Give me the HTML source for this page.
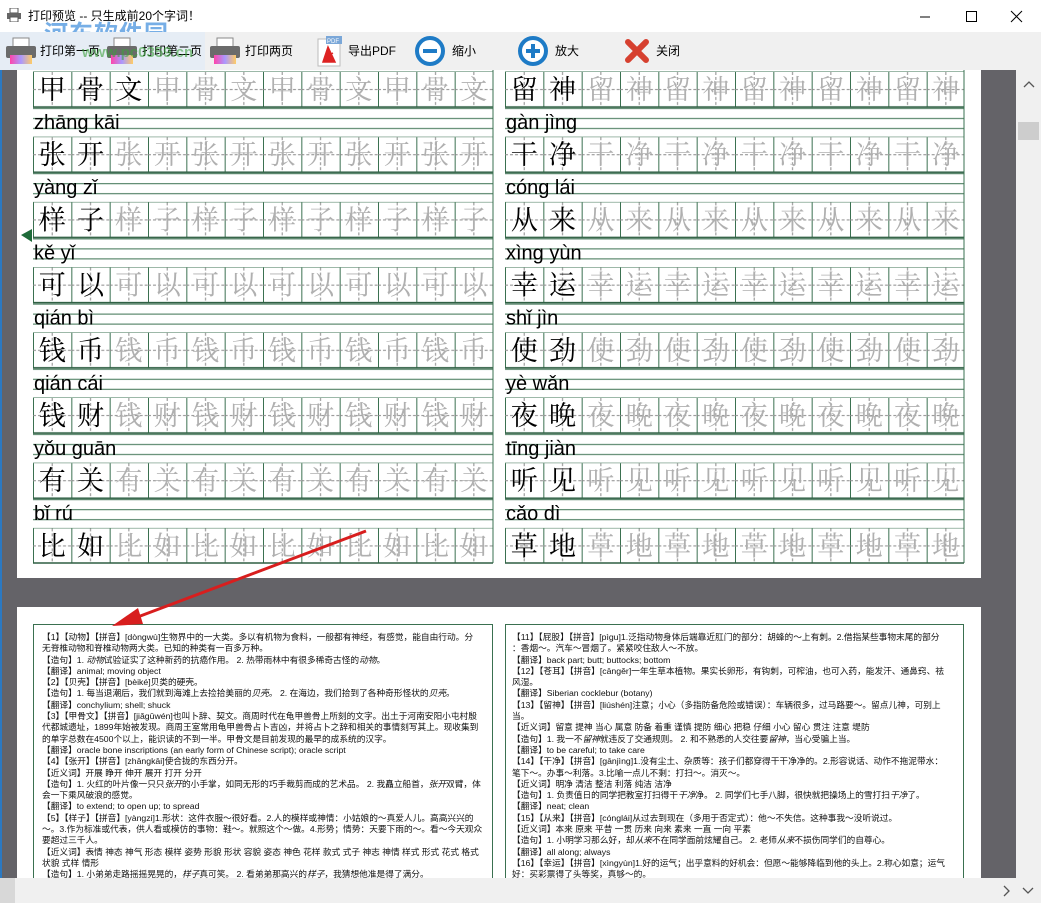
<!DOCTYPE html>
<html><head><meta charset="utf-8">
<style>
*{margin:0;padding:0;box-sizing:border-box}
body{width:1041px;height:903px;overflow:hidden;background:#fff;font-family:"Liberation Sans","Noto Sans CJK SC",sans-serif;position:relative}
.abs{position:absolute}
#title{left:0;top:0;width:1041px;height:32px;background:#fff;font-size:12px;color:#000}
#tb{left:0;top:32px;width:1041px;height:38px;background:#f0f0f0}
.btn{position:absolute;top:0;height:38px;font-size:12px;line-height:38px;color:#000;font-family:"Liberation Sans","Noto Sans CJK SC",sans-serif}
#area{left:0;top:70px;width:1016px;height:808px;background:#646368;box-shadow:inset 2px 0 0 #2b79c2}
.page{position:absolute;left:17px;width:964px;background:#fff}
.col{position:absolute;border:1px solid #3a7050;font-size:8.7px;line-height:11.3px;color:#111;padding:7px 0 0 8px;white-space:nowrap;overflow:hidden}
.col div{height:11.3px}
#vs{left:1016px;top:70px;width:25px;height:808px;background:#f0f0f0}
#hs{left:0;top:878px;width:1041px;height:25px;background:#f0f0f0}
</style></head><body>

<div id="title" class="abs">
 <svg class="abs" style="left:7px;top:8px" width="14" height="14"><rect x="3" y="0" width="8" height="5" fill="#fff" stroke="#555"/><rect x="0" y="5" width="14" height="6" fill="#666"/><rect x="3" y="9" width="8" height="5" fill="#fff" stroke="#555"/></svg>
 <div class="abs" style="left:28px;top:7px">打印预览 -- 只生成前20个字词！</div>
 <div class="abs" style="left:44px;top:14px;font-size:24px;font-weight:bold;color:rgba(60,140,220,0.7);letter-spacing:1px">河东软件园</div>
 <svg class="abs" style="left:918px;top:10px" width="110" height="14"><line x1="2" y1="7" x2="12" y2="7" stroke="#000"/><rect x="48.5" y="1.5" width="10" height="10" fill="none" stroke="#000"/><path d="M93 1 L104 12 M104 1 L93 12" stroke="#000"/></svg>
</div>

<div id="tb" class="abs">
 <div class="abs" style="left:0;top:0;width:205px;height:38px;background:#e6edf5"></div>
 <svg class="abs" style="left:5px;top:4px" width="32" height="30"><rect x="8" y="2" width="16" height="9" fill="#fff" stroke="#888"/><rect x="1" y="10" width="30" height="12" rx="2" fill="#6b6b6b"/><rect x="5" y="19" width="22" height="9" fill="url(#rb)"/><defs><linearGradient id="rb"><stop offset="0" stop-color="#f4a"/><stop offset=".5" stop-color="#a9f"/><stop offset="1" stop-color="#fc6"/></linearGradient></defs></svg>
 <div class="btn" style="left:40px">打印第一页</div>
 <svg class="abs" style="left:106px;top:4px" width="32" height="30"><rect x="8" y="2" width="16" height="9" fill="#fff" stroke="#888"/><rect x="1" y="10" width="30" height="12" rx="2" fill="#6b6b6b"/><rect x="5" y="19" width="22" height="9" fill="url(#rb)"/></svg>
 <div class="btn" style="left:142px">打印第二页</div>
 <svg class="abs" style="left:209px;top:4px" width="32" height="30"><rect x="8" y="2" width="16" height="9" fill="#fff" stroke="#888"/><rect x="1" y="10" width="30" height="12" rx="2" fill="#6b6b6b"/><rect x="5" y="19" width="22" height="9" fill="url(#rb)"/></svg>
 <div class="btn" style="left:245px">打印两页</div>
 <div class="abs" style="left:82px;top:12px;font-size:15px;color:rgba(60,160,60,0.6);font-weight:bold">www.pc0359.cn</div>
 <svg class="abs" style="left:316px;top:3px" width="28" height="32"><rect x="2" y="4" width="22" height="27" fill="#fff" stroke="#bbb"/><rect x="10" y="1" width="16" height="8" fill="#7aa7d8"/><text x="11" y="8" font-size="6" fill="#fff" font-family="Liberation Sans">PDF</text><path d="M7 27 L12 12 L19 27 Z M9 22 L17 18" fill="#d22" stroke="#d22" stroke-width="1.5"/></svg>
 <div class="btn" style="left:348px">导出PDF</div>
 <svg class="abs" style="left:414px;top:3px" width="32" height="32"><circle cx="16" cy="16" r="13" fill="#fff" stroke="#1e7bc6" stroke-width="4"/><rect x="9" y="14" width="14" height="4" fill="#1e7bc6"/></svg>
 <div class="btn" style="left:452px">缩小</div>
 <svg class="abs" style="left:517px;top:3px" width="32" height="32"><circle cx="16" cy="16" r="13" fill="#fff" stroke="#1e7bc6" stroke-width="4"/><rect x="9" y="14" width="14" height="4" fill="#1e7bc6"/><rect x="14" y="9" width="4" height="14" fill="#1e7bc6"/></svg>
 <div class="btn" style="left:555px">放大</div>
 <svg class="abs" style="left:624px;top:7px" width="26" height="24"><path d="M4 3 L22 21 M22 3 L4 21" stroke="#d6402f" stroke-width="6" stroke-linecap="round"/></svg>
 <div class="btn" style="left:656px">关闭</div>
</div>

<div id="area" class="abs">
 <div class="page" style="top:0;height:508px">
 <svg width="964" height="508" style="position:absolute;left:0;top:0">
  <defs>
   <pattern id="cl" x="16" y="0" width="38.333" height="65.2" patternUnits="userSpaceOnUse">
    <line x1="0.5" y1="0" x2="0.5" y2="35" stroke="#3a7050"/>
    <line x1="19.2" y1="0" x2="19.2" y2="35" stroke="#8a8a8a" stroke-dasharray="3,2"/>
    <line x1="0" y1="17.5" x2="38.333" y2="17.5" stroke="#8a8a8a" stroke-dasharray="3,2"/>
   </pattern>
   <pattern id="cr" x="488" y="0" width="38.333" height="65.2" patternUnits="userSpaceOnUse">
    <line x1="0.5" y1="0" x2="0.5" y2="35" stroke="#3a7050"/>
    <line x1="19.2" y1="0" x2="19.2" y2="35" stroke="#8a8a8a" stroke-dasharray="3,2"/>
    <line x1="0" y1="17.5" x2="38.333" y2="17.5" stroke="#8a8a8a" stroke-dasharray="3,2"/>
   </pattern>
   <pattern id="ln" x="0" y="2" width="10" height="65.2" patternUnits="userSpaceOnUse">
    <line x1="0" y1="35" x2="10" y2="35" stroke="#2e5e42" stroke-width="1.5"/>
    <line x1="0" y1="36.5" x2="10" y2="36.5" stroke="#3a7050"/>
    <line x1="0" y1="46.5" x2="10" y2="46.5" stroke="#3a7050"/>
    <line x1="0" y1="56.5" x2="10" y2="56.5" stroke="#3a7050"/>
    <line x1="0" y1="65.2" x2="10" y2="65.2" stroke="#3a7050"/>
   </pattern>
  </defs>
  <g transform="translate(0,2)">
   <rect x="16" y="0" width="460" height="491" fill="url(#cl)"/>
   <rect x="488" y="0" width="459" height="491" fill="url(#cr)"/>
  </g>
  <rect x="16" y="0" width="460" height="491" fill="url(#ln)"/>
  <rect x="488" y="0" width="459" height="491" fill="url(#ln)"/>
  <line x1="476" y1="0" x2="476" y2="493" stroke="#3a7050"/>
  <line x1="947" y1="0" x2="947" y2="493" stroke="#3a7050"/>
  <line x1="16" y1="493" x2="476" y2="493" stroke="#2e5e42" stroke-width="1.5"/>
  <line x1="488" y1="493" x2="947" y2="493" stroke="#2e5e42" stroke-width="1.5"/>

  <g font-family="'Noto Serif CJK SC','Liberation Serif',serif" font-size="27" text-anchor="middle">
   <text y="29"><tspan x="35.2 73.5 111.8" fill="#000">甲骨文</tspan><tspan x="150.2 188.5 226.8 265.2 303.5 341.8 380.2 418.5 456.8" fill="#b0b0b0">甲骨文甲骨文甲骨文</tspan></text>
   <text y="94.2"><tspan x="35.2 73.5" fill="#000">张开</tspan><tspan x="111.8 150.2 188.5 226.8 265.2 303.5 341.8 380.2 418.5 456.8" fill="#b0b0b0">张开张开张开张开张开</tspan></text>
   <text y="159.4"><tspan x="35.2 73.5" fill="#000">样子</tspan><tspan x="111.8 150.2 188.5 226.8 265.2 303.5 341.8 380.2 418.5 456.8" fill="#b0b0b0">样子样子样子样子样子</tspan></text>
   <text y="224.6"><tspan x="35.2 73.5" fill="#000">可以</tspan><tspan x="111.8 150.2 188.5 226.8 265.2 303.5 341.8 380.2 418.5 456.8" fill="#b0b0b0">可以可以可以可以可以</tspan></text>
   <text y="289.8"><tspan x="35.2 73.5" fill="#000">钱币</tspan><tspan x="111.8 150.2 188.5 226.8 265.2 303.5 341.8 380.2 418.5 456.8" fill="#b0b0b0">钱币钱币钱币钱币钱币</tspan></text>
   <text y="355"><tspan x="35.2 73.5" fill="#000">钱财</tspan><tspan x="111.8 150.2 188.5 226.8 265.2 303.5 341.8 380.2 418.5 456.8" fill="#b0b0b0">钱财钱财钱财钱财钱财</tspan></text>
   <text y="420.2"><tspan x="35.2 73.5" fill="#000">有关</tspan><tspan x="111.8 150.2 188.5 226.8 265.2 303.5 341.8 380.2 418.5 456.8" fill="#b0b0b0">有关有关有关有关有关</tspan></text>
   <text y="485.4"><tspan x="35.2 73.5" fill="#000">比如</tspan><tspan x="111.8 150.2 188.5 226.8 265.2 303.5 341.8 380.2 418.5 456.8" fill="#b0b0b0">比如比如比如比如比如</tspan></text>

   <text y="29"><tspan x="507.2 545.5" fill="#000">留神</tspan><tspan x="583.8 622.2 660.5 698.8 737.2 775.5 813.8 852.2 890.5 928.8" fill="#b0b0b0">留神留神留神留神留神</tspan></text>
   <text y="94.2"><tspan x="507.2 545.5" fill="#000">干净</tspan><tspan x="583.8 622.2 660.5 698.8 737.2 775.5 813.8 852.2 890.5 928.8" fill="#b0b0b0">干净干净干净干净干净</tspan></text>
   <text y="159.4"><tspan x="507.2 545.5" fill="#000">从来</tspan><tspan x="583.8 622.2 660.5 698.8 737.2 775.5 813.8 852.2 890.5 928.8" fill="#b0b0b0">从来从来从来从来从来</tspan></text>
   <text y="224.6"><tspan x="507.2 545.5" fill="#000">幸运</tspan><tspan x="583.8 622.2 660.5 698.8 737.2 775.5 813.8 852.2 890.5 928.8" fill="#b0b0b0">幸运幸运幸运幸运幸运</tspan></text>
   <text y="289.8"><tspan x="507.2 545.5" fill="#000">使劲</tspan><tspan x="583.8 622.2 660.5 698.8 737.2 775.5 813.8 852.2 890.5 928.8" fill="#b0b0b0">使劲使劲使劲使劲使劲</tspan></text>
   <text y="355"><tspan x="507.2 545.5" fill="#000">夜晚</tspan><tspan x="583.8 622.2 660.5 698.8 737.2 775.5 813.8 852.2 890.5 928.8" fill="#b0b0b0">夜晚夜晚夜晚夜晚夜晚</tspan></text>
   <text y="420.2"><tspan x="507.2 545.5" fill="#000">听见</tspan><tspan x="583.8 622.2 660.5 698.8 737.2 775.5 813.8 852.2 890.5 928.8" fill="#b0b0b0">听见听见听见听见听见</tspan></text>
   <text y="485.4"><tspan x="507.2 545.5" fill="#000">草地</tspan><tspan x="583.8 622.2 660.5 698.8 737.2 775.5 813.8 852.2 890.5 928.8" fill="#b0b0b0">草地草地草地草地草地</tspan></text>
  </g>
  <g font-family="'Liberation Sans',sans-serif" font-size="20" fill="#000">
   <text x="17" y="59">zhāng kāi</text><text x="489" y="59">gàn jìng</text>
   <text x="17" y="124.2">yàng zǐ</text><text x="489" y="124.2">cóng lái</text>
   <text x="17" y="189.4">kě yǐ</text><text x="489" y="189.4">xìng yùn</text>
   <text x="17" y="254.6">qián bì</text><text x="489" y="254.6">shǐ jìn</text>
   <text x="17" y="319.8">qián cái</text><text x="489" y="319.8">yè wǎn</text>
   <text x="17" y="385">yǒu guān</text><text x="489" y="385">tīng jiàn</text>
   <text x="17" y="450.2">bǐ rú</text><text x="489" y="450.2">cǎo dì</text>
  </g>
 </svg>
 </div>

 <div class="page" style="top:537px;height:271px">
  <div class="col" style="left:16px;top:17px;width:460px;height:260px">
   <div>【1】【动物】【拼音】[dòngwù]生物界中的一大类。多以有机物为食料，一般都有神经，有感觉，能自由行动。分</div>
   <div>无脊椎动物和脊椎动物两大类。已知的种类有一百多万种。</div>
   <div>【造句】1. <i>动物</i>试验证实了这种新药的抗癌作用。 2. 热带雨林中有很多稀奇古怪的<i>动物</i>。</div>
   <div>【翻译】animal; moving object</div>
   <div>【2】【贝壳】【拼音】[bèiké]贝类的硬壳。</div>
   <div>【造句】1. 每当退潮后，我们就到海滩上去捡拾美丽的<i>贝壳</i>。 2. 在海边，我们拾到了各种奇形怪状的<i>贝壳</i>。</div>
   <div>【翻译】conchylium; shell; shuck</div>
   <div>【3】【甲骨文】【拼音】[jiǎgǔwén]也叫卜辞、契文。商周时代在龟甲兽骨上所刻的文字。出土于河南安阳小屯村殷</div>
   <div>代都城遗址，1899年始被发现。商周王室常用龟甲兽骨占卜吉凶，并将占卜之辞和相关的事情刻写其上。现收集到</div>
   <div>的单字总数在4500个以上，能识读的不到一半。甲骨文是目前发现的最早的成系统的汉字。</div>
   <div>【翻译】oracle bone inscriptions (an early form of Chinese script); oracle script</div>
   <div>【4】【张开】【拼音】[zhāngkāi]使合拢的东西分开。</div>
   <div>【近义词】开展 睁开 伸开 展开 打开 分开</div>
   <div>【造句】1. 火红的叶片像一只只<i>张开</i>的小手掌，如同无形的巧手裁剪而成的艺术品。 2. 我矗立船首，<i>张开</i>双臂，体</div>
   <div>会一下乘风破浪的感觉。</div>
   <div>【翻译】to extend; to open up; to spread</div>
   <div>【5】【样子】【拼音】[yàngzi]1.形状：这件衣服～很好看。2.人的模样或神情：小姑娘的～真爱人儿。高高兴兴的</div>
   <div>～。3.作为标准或代表，供人看或模仿的事物：鞋～。就照这个～做。4.形势；情势：天要下雨的～。看～今天观众</div>
   <div>要超过三千人。</div>
   <div>【近义词】表情 神态 神气 形态 模样 姿势 形貌 形状 容貌 姿态 神色 花样 款式 式子 神志 神情 样式 形式 花式 格式</div>
   <div>状貌 式样 情形</div>
   <div>【造句】1. 小弟弟走路摇摇晃晃的，<i>样子</i>真可笑。 2. 看弟弟那高兴的<i>样子</i>，我猜想他准是得了满分。</div>
  </div>
  <div class="col" style="left:488px;top:17px;width:459px;height:260px;padding-left:6px">
   <div>【11】【屁股】【拼音】[pìgu]1.泛指动物身体后端靠近肛门的部分：胡蜂的～上有刺。2.借指某些事物末尾的部分</div>
   <div>：香烟～。汽车～冒烟了。紧紧咬住敌人～不放。</div>
   <div>【翻译】back part; butt; buttocks; bottom</div>
   <div>【12】【苍耳】【拼音】[cāngěr]一年生草本植物。果实长卵形，有钩刺，可榨油，也可入药，能发汗、通鼻窍、祛</div>
   <div>风湿。</div>
   <div>【翻译】Siberian cocklebur (botany)</div>
   <div>【13】【留神】【拼音】[liúshén]注意；小心（多指防备危险或错误）：车辆很多，过马路要～。留点儿神，可别上</div>
   <div>当。</div>
   <div>【近义词】留意 提神 当心 属意 防备 着重 谨慎 提防 细心 把稳 仔细 小心 留心 贯注 注意 堤防</div>
   <div>【造句】1. 我一不<i>留神</i>就违反了交通规则。 2. 和不熟悉的人交往要<i>留神</i>，当心受骗上当。</div>
   <div>【翻译】to be careful; to take care</div>
   <div>【14】【干净】【拼音】[gānjìng]1.没有尘土、杂质等：孩子们都穿得干干净净的。2.形容说话、动作不拖泥带水：</div>
   <div>笔下～。办事～利落。3.比喻一点儿不剩：打扫～。消灭～。</div>
   <div>【近义词】明净 清洁 整洁 利落 纯洁 洁净</div>
   <div>【造句】1. 负责值日的同学把教室打扫得干<i>干净</i>净。 2. 同学们七手八脚，很快就把操场上的雪打扫<i>干净</i>了。</div>
   <div>【翻译】neat; clean</div>
   <div>【15】【从来】【拼音】[cónglái]从过去到现在（多用于否定式）：他～不失信。这种事我～没听说过。</div>
   <div>【近义词】本来 原来 平昔 一贯 历来 向来 素来 一直 一向 平素</div>
   <div>【造句】1. 小明学习那么好，却<i>从来</i>不在同学面前炫耀自己。 2. 老师<i>从来</i>不损伤同学们的自尊心。</div>
   <div>【翻译】all along; always</div>
   <div>【16】【幸运】【拼音】[xìngyùn]1.好的运气；出乎意料的好机会：但愿～能够降临到他的头上。2.称心如意；运气</div>
   <div>好：买彩票得了头等奖，真够～的。</div>
  </div>
 </div>

 <svg class="abs" style="left:0;top:0" width="1014" height="808">
  <path d="M21 165 L32 159 L32 172 Z" fill="#1f6b3a"/>
  <line x1="366" y1="461" x2="135" y2="548" stroke="#d81e1e" stroke-width="3"/>
  <path d="M112 556 L138 538 L143 554 Z" fill="#d81e1e"/>
 </svg>
</div>

<div id="vs" class="abs">
 <svg class="abs" style="left:7px;top:11px" width="12" height="8"><path d="M1 6 L6 1 L11 6" stroke="#555" fill="none" stroke-width="1.3"/></svg>
 <div class="abs" style="left:2px;top:52px;width:21px;height:18px;background:#cdcdcd"></div>
</div>
<div id="hs" class="abs">
 <div class="abs" style="left:0;top:0;width:15px;height:25px;background:#d8d8d8"></div>
 <svg class="abs" style="left:1002px;top:7px" width="10" height="12"><path d="M2 1 L7 6 L2 11" stroke="#555" fill="none" stroke-width="1.3"/></svg>
 <svg class="abs" style="left:1022px;top:9px" width="12" height="8"><path d="M1 1 L6 6 L11 1" stroke="#555" fill="none" stroke-width="1.3"/></svg>
</div>
</body></html>
